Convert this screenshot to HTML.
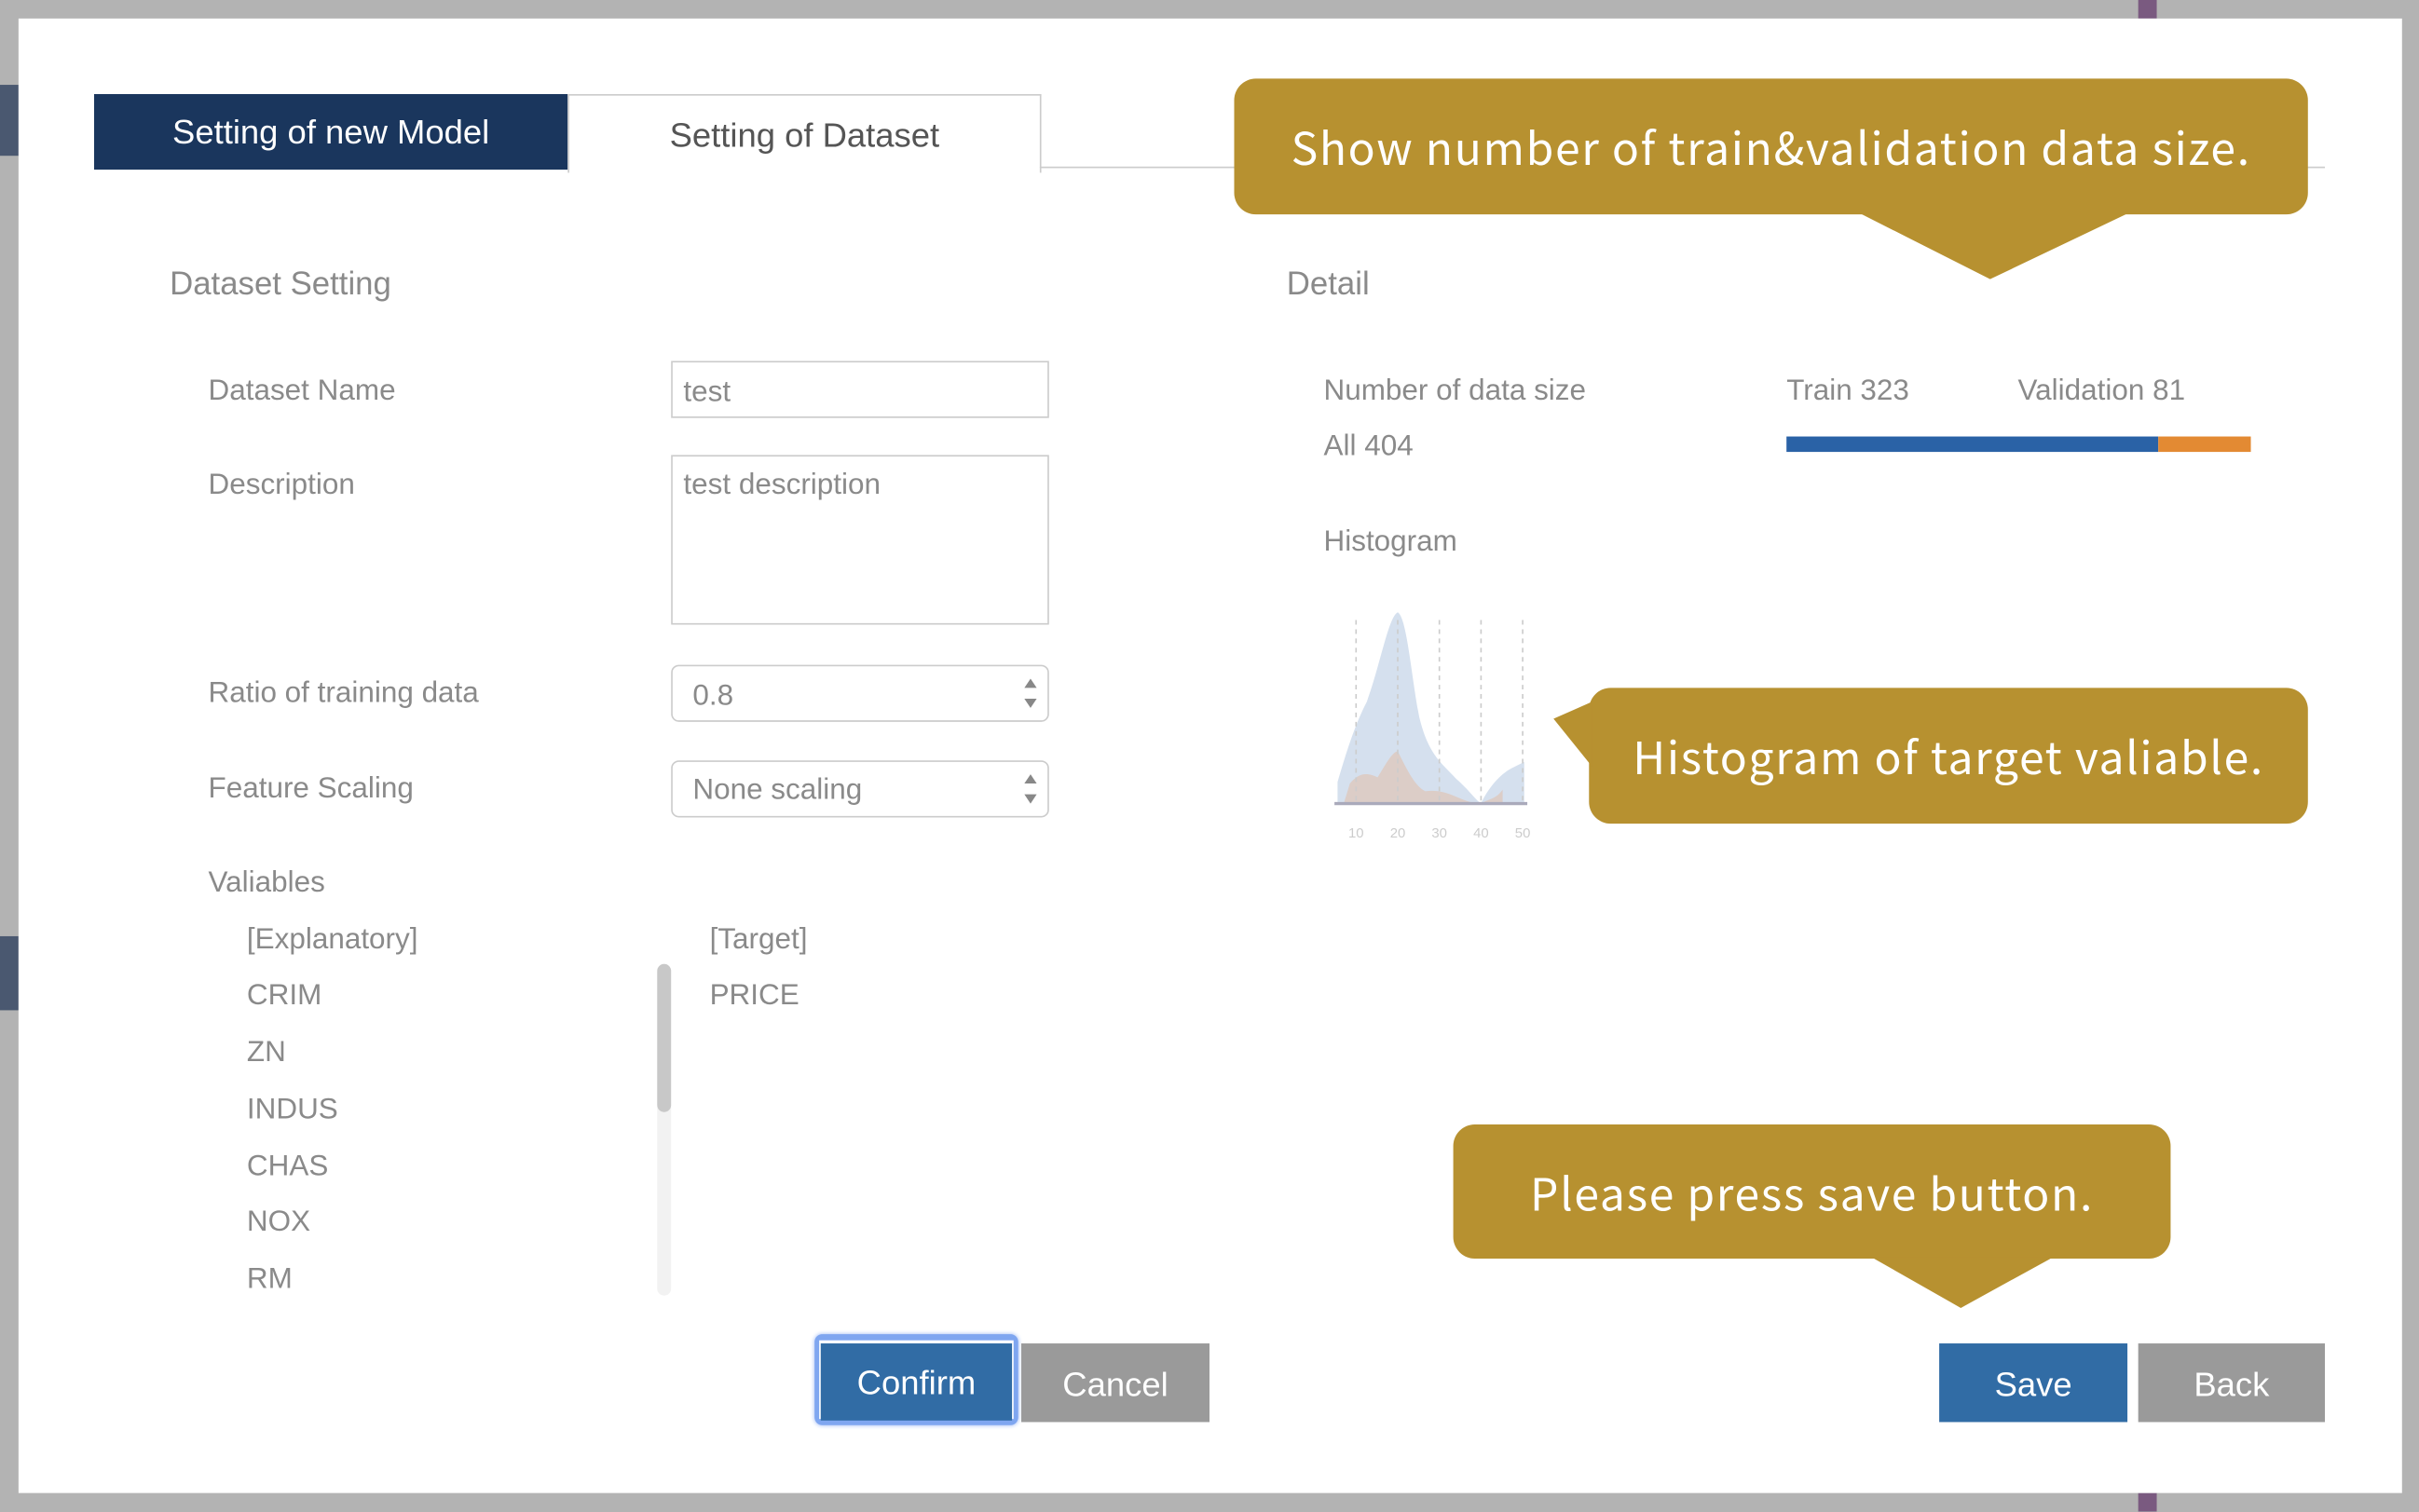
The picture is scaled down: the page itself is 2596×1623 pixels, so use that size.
<!DOCTYPE html>
<html><head><meta charset="utf-8"><style>
html,body{margin:0;padding:0;width:2596px;height:1622px;overflow:hidden;background:#b3b3b3}
#s{position:absolute;left:0;top:0;width:1568px;height:980px;transform:scale(1.65561);transform-origin:0 0;font-family:"Liberation Sans",sans-serif}
.a{position:absolute}
.t{position:absolute;line-height:24px;white-space:nowrap;color:#8a8a8a;font-size:19px;margin-top:2px}
.call{position:absolute;background:#b79130;border-radius:14px;color:#fff;font-family:"Noto Sans CJK JP","Liberation Sans",sans-serif;font-size:29px;letter-spacing:1px;display:flex;align-items:center;justify-content:center}
.btn{position:absolute;color:#fff;font-size:22px;display:flex;align-items:center;justify-content:center}
</style></head><body><div id="s">
<div class="a" style="left:0;top:55px;width:12px;height:46px;background:#4a5870"></div>
<div class="a" style="left:0;top:607px;width:12px;height:48px;background:#4a5870"></div>
<div class="a" style="left:1386px;top:0;width:12px;height:12px;background:#7a5a80"></div>
<div class="a" style="left:1386px;top:968px;width:12px;height:12px;background:#7a5a80"></div>
<div class="a" style="left:12px;top:12px;width:1545px;height:956px;background:#fff"></div>

<div class="a" style="left:61px;top:61px;width:307px;height:49px;background:#1a365d;color:#fff;font-size:22px;display:flex;align-items:center;justify-content:center">Setting of new Model</div>
<div class="a" style="left:368px;top:61px;width:305px;height:48px;border:1px solid #ccc;border-bottom:none;background:#fff;color:#555;font-size:22px;display:flex;align-items:center;justify-content:center;padding-top:2px;box-sizing:content-box">Setting of Dataset</div>
<div class="a" style="left:674px;top:108px;width:833px;height:1px;background:#ccc"></div>

<div class="t" style="left:110px;top:171px;font-size:21px">Dataset Setting</div>
<div class="t" style="left:135px;top:240px">Dataset Name</div>
<div class="t" style="left:135px;top:301px">Description</div>
<div class="t" style="left:135px;top:436px">Ratio of training data</div>
<div class="t" style="left:135px;top:498px">Feature Scaling</div>
<div class="t" style="left:135px;top:559px">Valiables</div>

<div class="a" style="left:435px;top:234px;width:243px;height:35px;border:1px solid #ccc"></div>
<div class="t" style="left:443px;top:241px">test</div>
<div class="a" style="left:435px;top:295px;width:243px;height:108px;border:1px solid #ccc"></div>
<div class="t" style="left:443px;top:301px">test description</div>
<div class="a" style="left:435px;top:431px;width:243px;height:35px;border:1px solid #ccc;border-radius:5px"></div>
<div class="t" style="left:449px;top:438px">0.8</div>
<div class="a" style="left:435px;top:493px;width:243px;height:35px;border:1px solid #ccc;border-radius:5px"></div>
<div class="t" style="left:449px;top:499px">None scaling</div>
<svg class="a" style="left:662px;top:438px" width="12" height="84"><path d="M6 2L10 8H2Z M6 21L10 15H2Z M6 64L10 70H2Z M6 83L10 77H2Z" fill="#888"/></svg>

<div class="t" style="left:160px;top:596px">[Explanatory]</div>
<div class="t" style="left:160px;top:632px">CRIM</div>
<div class="t" style="left:160px;top:669px">ZN</div>
<div class="t" style="left:160px;top:706px">INDUS</div>
<div class="t" style="left:160px;top:743px">CHAS</div>
<div class="t" style="left:160px;top:779px">NOX</div>
<div class="t" style="left:160px;top:816px">RM</div>
<div class="t" style="left:460px;top:596px">[Target]</div>
<div class="t" style="left:460px;top:632px">PRICE</div>
<div class="a" style="left:426px;top:625px;width:9px;height:215px;background:#f2f2f2;border-radius:5px"></div>
<div class="a" style="left:426px;top:625px;width:9px;height:96px;background:#c8c8c8;border-radius:5px"></div>

<div class="t" style="left:834px;top:171px;font-size:21px">Detail</div>
<div class="t" style="left:858px;top:240px">Number of data size</div>
<div class="t" style="left:858px;top:276px">All 404</div>
<div class="t" style="left:1158px;top:240px">Train 323</div>
<div class="t" style="left:1308px;top:240px">Validation 81</div>
<div class="a" style="left:1158px;top:283px;width:241px;height:10px;background:#2a62a6"></div>
<div class="a" style="left:1399px;top:283px;width:60px;height:10px;background:#e38a33"></div>
<div class="t" style="left:858px;top:338px">Histogram</div>

<svg class="a" style="left:860px;top:390px" width="140" height="160">
<g transform="translate(-860,-390)">
<path d="M867 521L867 507C872 490 878 470 886 455C895 430 900 400 906 397C912 400 915 440 920 465C926 490 935 495 944 505C952 512 956 518 960 521C964 512 972 502 980 498L988 494L988 521Z" fill="#d5e0ee"/>
<path d="M871 521L875 508C880 502 885 500 893 504C898 496 902 488 906 487C911 497 917 510 924 513C932 512 938 514 945 517C952 520 956 521 960 521C965 518 970 518 974 512L974 521Z" fill="#dccbc4" opacity=".95"/>
<g stroke="#ccc" stroke-dasharray="3,3" stroke-width="1"><path d="M879 402V521M906 402V521M933 402V521M960 402V521M987 402V521"/></g>
<path d="M865 521H990" stroke="#aab" stroke-width="2"/>
<g fill="#ccc" font-size="9" font-family="Liberation Sans" text-anchor="middle"><text x="879" y="543">10</text><text x="906" y="543">20</text><text x="933" y="543">30</text><text x="960" y="543">40</text><text x="987" y="543">50</text></g>
</g></svg>

<div class="call" style="left:800px;top:51px;width:696px;height:88px">Show number of train&amp;validation data size.</div>
<svg class="a" style="left:1200px;top:138px" width="190" height="46"><path d="M5 0H180L90 43Z" fill="#b79130"/></svg>
<div class="call" style="left:1030px;top:446px;width:466px;height:88px">Histogram of target valiable.</div>
<svg class="a" style="left:1005px;top:455px" width="30" height="45"><path d="M2 11L27 0V42Z" fill="#b79130"/></svg>
<div class="call" style="left:942px;top:729px;width:465px;height:87px">Please press save button.</div>
<svg class="a" style="left:1210px;top:815px" width="125" height="36"><path d="M3 0H121L61 33Z" fill="#b79130"/></svg>

<div class="a" style="left:528px;top:865px;width:132px;height:59px;border-radius:5px;background:#7fa6f0;box-shadow:0 0 3px #9cb8f5"></div>
<div class="a" style="left:531px;top:869px;width:126px;height:51px;background:#fff"></div>
<div class="btn" style="left:532px;top:871px;width:124px;height:48px;background:#316ca5;padding-top:2px">Confirm</div>
<div class="btn" style="left:662px;top:871px;width:122px;height:49px;background:#9a9a9a;padding-top:2px">Cancel</div>
<div class="btn" style="left:1257px;top:871px;width:122px;height:49px;background:#316ca5;padding-top:2px">Save</div>
<div class="btn" style="left:1386px;top:871px;width:121px;height:49px;background:#9a9a9a;padding-top:2px">Back</div>
</div></body></html>
